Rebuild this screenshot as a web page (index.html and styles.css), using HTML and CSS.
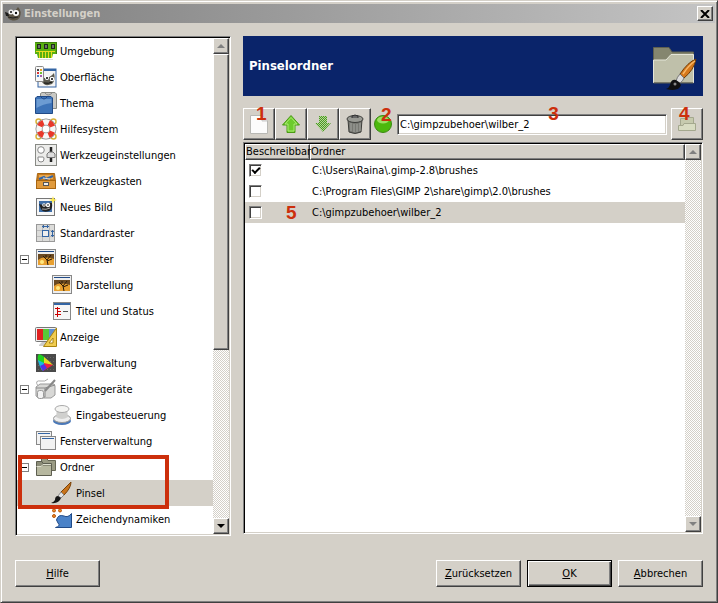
FILE: index.html
```html
<!DOCTYPE html>
<html lang="de">
<head>
    <meta charset="UTF-8">
    <meta name="viewport" content="width=device-width, initial-scale=1.0">
    <title>Einstellungen</title>
    <link rel="stylesheet" href="styles.css">
</head>
<body>
    <div class="window">
        <header class="titlebar">
            <svg class="titlebar-icon" width="18" height="18" viewBox="0 0 18 18">
                <path d="M1 7 L5 9 Q10 8 14 2 Q18 6 16 12 Q13 17 7 15 Q4 14 3 11 Z" fill="#5c5444"/>
                <path d="M1 7 L4 8 L5 11 L2 11 Z" fill="#1c1c1c"/>
                <circle cx="7" cy="7" r="2.5" fill="#eee"/>
                <circle cx="12" cy="8" r="3" fill="#fff"/>
                <circle cx="7" cy="7" r="1" fill="#111"/>
                <circle cx="12" cy="8" r="1.2" fill="#111"/>
                <path d="M4 12 Q9 14 14 12" stroke="#222" fill="none"/>
            </svg>
            <h1 class="titlebar-text">Einstellungen</h1>
            <button class="close" type="button" aria-label="Schließen">
                <svg width="10" height="8" viewBox="0 0 10 8"><path d="M1 0 L9 8 M9 0 L1 8" stroke="#000" stroke-width="2"/></svg>
            </button>
        </header>

        <main class="panes">
            <nav class="tree sunken">
                <ul class="tree-list">
                    <li><div class="row">
                        <svg class="icon" viewBox="0 0 22 22">
                            <path d="M0 2 H22 V14 H18 L17 18 H3 L2 14 H0 Z" fill="#58b010"/>
                            <path d="M.5 2.5 H21.5 V14" fill="none" stroke="#3f8010"/>
                            <path d="M2 4 H6 V9 H2 Z M9 4 H13 V9 H9 Z M16 4 H20 V9 H16 Z" fill="#1f2a1a"/>
                            <path d="M4 5 V8 M11 5 V8 M18 5 V8" stroke="#bbb"/>
                            <path d="M1 11.500 H20 M4.500 12 V18 M7.500 12 V18 M10.500 12 V18 M13.500 12 V18 M16.500 12 V18" stroke="#e8dc20"/>
                            <path d="M2 19.500 H18" stroke="#ddd"/>
                        </svg>
                        <span>Umgebung</span>
                    </div></li>
                    <li><div class="row">
                        <svg class="icon" viewBox="0 0 22 22">
                            <rect x="3" y="3" width="18" height="18" fill="#f4f4f4" stroke="#3465a4"/>
                            <path d="M3 4 H21" stroke="#3465a4" stroke-width="2"/>
                            <path d="M5 11 L10 12 Q15 12 19 7 Q21 14 17 18 Q10 21 7 16 Z" fill="#5b5a50"/>
                            <circle cx="12" cy="12" r="2" fill="#fff"/><circle cx="17" cy="13" r="2.300" fill="#fff"/>
                            <circle cx="12" cy="12" r="1"/><circle cx="17" cy="13" r="1"/>
                            <path d="M9 17 Q14 18 17 16" stroke="#111" fill="none"/>
                            <rect x=".5" y=".5" width="8" height="15" rx="1" fill="#f8f8f8" stroke="#888"/>
                            <path d="M2 3 H4 V5 H2 Z" fill="#444"/><path d="M5 3 H7 V5 H5 Z" fill="#e7a020"/>
                            <path d="M2 6 H4 V8 H2 Z" fill="#d33"/><path d="M5 6 H7 V8 H5 Z" fill="#73c030"/>
                            <path d="M2 9 H4 V11 H2 Z" fill="#4a80c8"/><path d="M5 9 H7 V11 H5 Z" fill="#a55bb0"/>
                        </svg>
                        <span>Oberfläche</span>
                    </div></li>
                    <li><div class="row">
                        <svg class="icon" viewBox="0 0 22 22">
                            <path d="M5.500 1.500 L7 .5 H20 L21.500 2 V16.500 H5.500 Z" fill="#c8c8c4" stroke="#888a85"/>
                            <path d="M10 1 Q13 5 17 1" fill="none" stroke="#888"/>
                            <path d="M.5 6 L2 4.500 H16 L17.500 6 V21.500 H.5 Z" fill="#3d73b8" stroke="#204a87"/>
                            <path d="M1.500 7 H16.500 V11 Q8 12 1.500 16 Z" fill="#6c9bd2"/>
                            <path d="M6 5 Q9 9 12 5" fill="none" stroke="#204a87"/>
                        </svg>
                        <span>Thema</span>
                    </div></li>
                    <li><div class="row">
                        <svg class="icon" viewBox="0 0 22 22">
                            <g fill="none" stroke="#d8b23a" stroke-width="1.500">
                                <circle cx="3.500" cy="3.500" r="2.500"/><circle cx="18.500" cy="3.500" r="2.500"/>
                                <circle cx="3.500" cy="18.500" r="2.500"/><circle cx="18.500" cy="18.500" r="2.500"/>
                            </g>
                            <circle cx="11" cy="11" r="7" fill="none" stroke="#888" stroke-width="7"/>
                            <circle cx="11" cy="11" r="7" fill="none" stroke="#f6f6f6" stroke-width="5.500"/>
                            <circle cx="11" cy="11" r="7" fill="none" stroke="#e8382a" stroke-width="5.500" stroke-dasharray="5.500 5.500" stroke-dashoffset="-2.700"/>
                        </svg>
                        <span>Hilfesystem</span>
                    </div></li>
                    <li><div class="row">
                        <svg class="icon" viewBox="0 0 22 22">
                            <rect x=".5" y=".5" width="21" height="21" fill="#ececea" stroke="#888a85"/>
                            <circle cx="6" cy="6" r="3.300" fill="#fff" stroke="#888"/>
                            <path d="M3 13 H8 Q9 13 9 15 Q9 18 6 18 Q3 18 3 15 Z" fill="#fff" stroke="#888"/>
                            <path d="M16 3 V18" stroke="#222" stroke-width="2.500"/>
                            <path d="M12 13.500 V10 L14 8 H18 L20 10 V13.500 Z" fill="#ddd" stroke="#777"/>
                        </svg>
                        <span>Werkzeugeinstellungen</span>
                    </div></li>
                    <li><div class="row">
                        <svg class="icon" viewBox="0 0 22 22">
                            <path d="M2.500 3.500 H19.500 L20.500 11.500 H1.500 Z" fill="#c87a1c" stroke="#a86510"/>
                            <path d="M4 5 H18 V9 H4 Z" fill="#e8a850"/>
                            <path d="M4 9 L9 7 L11 9 L18 6" fill="none" stroke="#3465a4" stroke-width="2"/>
                            <path d="M8 8 L15 9" stroke="#ddd"/>
                            <rect x="1.500" y="10.500" width="19" height="8" fill="#e09a3c" stroke="#a86510"/>
                            <rect x="8.500" y="12.500" width="5" height="3" fill="#eee" stroke="#555"/>
                        </svg>
                        <span>Werkzeugkasten</span>
                    </div></li>
                    <li><div class="row">
                        <svg class="icon" viewBox="0 0 22 22">
                            <rect x="1.500" y="2.500" width="18" height="17" fill="#f6f6f6" stroke="#777"/>
                            <rect x="4" y="5" width="13" height="11" fill="#3e6ea8"/>
                            <path d="M4 8 L8 9 Q13 6 17 7 Q18 13 14 15 Q8 17 6 13 Z" fill="#222"/>
                            <circle cx="9" cy="9" r="1.800" fill="#fff"/><circle cx="13" cy="9" r="2.200" fill="#fff"/>
                            <circle cx="9" cy="9" r=".8"/><circle cx="13" cy="9" r=".8"/>
                            <path d="M7 13 Q11 14 15 12" stroke="#aaa" fill="none"/>
                            <path d="M18 0 L19 3 L22 4 L19 5 L18 8 L17 5 L14 4 L17 3 Z" fill="#fce94f"/>
                        </svg>
                        <span>Neues Bild</span>
                    </div></li>
                    <li><div class="row">
                        <svg class="icon" viewBox="0 0 22 22">
                            <rect x="1.500" y="2.500" width="18" height="17" fill="#dcdcda" stroke="#999"/>
                            <path d="M7.500 3 V19 M14.500 3 V19 M2 8.500 H19 M2 14.500 H19" stroke="#bbb"/>
                            <rect x="7.500" y="8.500" width="6" height="6" fill="#eee" stroke="#3465a4"/>
                            <path d="M7 4.500 H14 M8.500 3 V6 M12.500 3 V6 M17.500 8 V15 M16 9.500 H19 M16 13.500 H19" fill="none" stroke="#3465a4"/>
                        </svg>
                        <span>Standardraster</span>
                    </div></li>
                    <li>
                        <div class="row">
                            <button class="expander" type="button" aria-label="Bildfenster zuklappen"></button>
                            <svg class="icon" viewBox="0 0 22 22">
                                <rect x="1.500" y="1.500" width="19" height="18" fill="#eee" stroke="#888"/>
                                <path d="M3 3.500 H19" stroke="#204a87"/>
                                <rect x="3" y="6" width="16" height="11" fill="#6b4a22"/>
                                <path d="M3 12 Q8 7 19 11 V17 H3 Z" fill="#e8a030"/>
                                <circle cx="7" cy="14" r="2" fill="#ffe880"/>
                                <path d="M13 17 L12 12 L8 8 M12 12 L16 7 M12 13 L17 11 M11 10 V7" fill="none" stroke="#2a1a08"/>
                            </svg>
                            <span>Bildfenster</span>
                        </div>
                        <ul class="tree-sub">
                            <li><div class="row">
                                <svg class="icon" viewBox="0 0 22 22">
                                    <rect x="1.500" y="1.500" width="19" height="18" fill="#eee" stroke="#888"/>
                                    <path d="M3 3.500 H19" stroke="#204a87"/>
                                    <rect x="3" y="6" width="16" height="11" fill="#6b4a22"/>
                                    <path d="M3 12 Q8 7 19 11 V17 H3 Z" fill="#e8a030"/>
                                    <circle cx="7" cy="14" r="2" fill="#ffe880"/>
                                    <path d="M13 17 L12 12 L8 8 M12 12 L16 7 M12 13 L17 11 M11 10 V7" fill="none" stroke="#2a1a08"/>
                                </svg>
                                <span>Darstellung</span>
                            </div></li>
                            <li><div class="row">
                                <svg class="icon" viewBox="0 0 22 22">
                                    <rect x="2.500" y="2.500" width="17" height="17" fill="#f6f6f6" stroke="#888"/>
                                    <path d="M3 4 H19" stroke="#3465a4" stroke-width="2"/>
                                    <path d="M6.500 7 V17 M4 8.500 H9 M6 11.500 H10 M4 14.500 H10" stroke="#cc0000"/>
                                    <path d="M12 11.500 H17" stroke="#555"/>
                                </svg>
                                <span>Titel und Status</span>
                            </div></li>
                        </ul>
                    </li>
                    <li><div class="row">
                        <svg class="icon" viewBox="0 0 22 22">
                            <rect x=".5" y="1.500" width="21" height="14" rx="1" fill="#eee" stroke="#777"/>
                            <path d="M2 3 H8 V14 H2 Z" fill="#e02020"/><path d="M8 3 H14 V14 H8 Z" fill="#58c838"/><path d="M14 3 H20 V14 H14 Z" fill="#6090d0"/>
                            <path d="M4 19 L7 16 H14 V20 H4 Z" fill="#ccc"/>
                            <path d="M21.500 2 V20.500 H8.500 Z" fill="#f0cc50" stroke="#a88410"/>
                            <path d="M18 12 V17 H14 Z" fill="#fff" stroke="#a88410"/>
                        </svg>
                        <span>Anzeige</span>
                    </div></li>
                    <li><div class="row">
                        <svg class="icon" viewBox="0 0 22 22">
                            <rect x="1" y="2" width="20" height="18" fill="#4a4a4a"/>
                            <path d="M3 5.500 H20 M3 9.500 H20 M3 13.500 H20 M3 17.500 H20" stroke="#666" stroke-dasharray="1 2"/>
                            <path d="M4 2 Q8 3 12 8 L9 12 L3 9 Q2 4 4 2 Z" fill="#20d020"/>
                            <path d="M9 5 Q13 8 18 13 L9 12 Z" fill="#e8d820"/>
                            <path d="M18 13 L8 19 L9 11 Z" fill="#f02040"/>
                            <path d="M3 8 L9 11 L8 19 Q4 15 3 8 Z" fill="#18b8e0"/>
                            <path d="M5 14 L9 12 L12 16 L8 19 Z" fill="#5030e8"/>
                        </svg>
                        <span>Farbverwaltung</span>
                    </div></li>
                    <li>
                        <div class="row">
                            <button class="expander" type="button" aria-label="Eingabegeräte zuklappen"></button>
                            <svg class="icon" viewBox="0 0 22 22">
                                <path d="M1 9 L5 6 H19 L20 8 V17 L16 20 H4 L1 18 Z" fill="#d8d8d6" stroke="#999"/>
                                <path d="M1 10 H10 V19 H2 M10 10 L20 7" fill="none" stroke="#888"/>
                                <path d="M3 8 Q-1 2 6 3 Q10 4 13 1" fill="none" stroke="#aaa"/>
                                <path d="M20 2 L10 13" stroke="#888" stroke-width="2"/>
                                <rect x="2.500" y="12.500" width="6" height="8" rx="2" fill="#f2f2f2" stroke="#999"/>
                            </svg>
                            <span>Eingabegeräte</span>
                        </div>
                        <ul class="tree-sub">
                            <li><div class="row">
                                <svg class="icon" viewBox="0 0 22 22">
                                    <ellipse cx="11" cy="17" rx="9" ry="4" fill="#4a78b8"/>
                                    <ellipse cx="11" cy="14.500" rx="8.500" ry="4" fill="#eee" stroke="#999"/>
                                    <path d="M6 5 L5 13 Q11 17 17 13 L16 5 Z" fill="#d0d0ce"/>
                                    <ellipse cx="11" cy="5" rx="7" ry="3.500" fill="#f4f4f2" stroke="#aaa"/>
                                </svg>
                                <span>Eingabesteuerung</span>
                            </div></li>
                        </ul>
                    </li>
                    <li><div class="row">
                        <svg class="icon" viewBox="0 0 22 22">
                            <rect x="1.500" y="1.500" width="15" height="13" fill="#f2f2f2" stroke="#888"/>
                            <path d="M3 3.500 H15" stroke="#3465a4"/>
                            <rect x="5.500" y="6.500" width="15" height="13" fill="#f2f2f2" stroke="#888"/>
                            <path d="M7 8.500 H19" stroke="#3465a4"/>
                        </svg>
                        <span>Fensterverwaltung</span>
                    </div></li>
                    <li class="marked">
                        <div class="row">
                            <button class="expander" type="button" aria-label="Ordner zuklappen"></button>
                            <svg class="icon" viewBox="0 0 22 22">
                                <path d="M6.500 2.500 H12 L13 4.500 H20.500 V14.500 H6.500 Z" fill="#9a9b84" stroke="#666755"/>
                                <path d="M1.500 5.500 H7 L8 7.500 H16.500 V19.500 H1.500 Z" fill="#8b8c78" stroke="#5d5e50"/>
                                <path d="M2 10 H16 V19 H2 Z" fill="#b7b8a0"/>
                                <path d="M1.500 10.500 H6 L8 8.500 H16" fill="none" stroke="#dedfcf"/>
                            </svg>
                            <span>Ordner</span>
                        </div>
                        <ul class="tree-sub">
                            <li><div class="row selected">
                                <svg class="icon" viewBox="0 0 22 22">
                                    <path d="M20 0 L10 10 L13 13 Q20 6 20 0 Z" fill="#c8741c" stroke="#7a4208"/>
                                    <path d="M10 10 L7 14 L10 16 L13 13 Z" fill="#e4e4e4" stroke="#888"/>
                                    <path d="M7 14 Q4 14 4 18 Q3 20 0 21 Q8 22 10 16 Z" fill="#151515"/>
                                </svg>
                                <span>Pinsel</span>
                            </div></li>
                            <li><div class="row">
                                <svg class="icon" viewBox="0 0 22 22">
                                    <circle cx="3" cy="2.500" r="1.500" fill="#f08a28" stroke="#b85608"/>
                                    <circle cx="9" cy="2.500" r="1.500" fill="#f08a28" stroke="#b85608"/>
                                    <circle cx="3" cy="8" r="1.500" fill="#f08a28" stroke="#b85608"/>
                                    <path d="M5.500 12 Q7 6 13 8 Q17 10 20.500 5.500 V19.500 H4.500 Q10 18 7 15 Z" fill="#4a82c8" stroke="#204a87"/>
                                </svg>
                                <span>Zeichendynamiken</span>
                            </div></li>
                        </ul>
                    </li>
                </ul>
                <div class="scrollbar">
                    <button class="scroll-button" type="button" aria-label="Nach oben" disabled><svg width="8" height="4" viewBox="0 0 8 4"><path d="M0 4 L4 0 L8 4 Z" fill="currentColor"/></svg></button>
                    <div class="scroll-thumb"></div>
                    <div class="scroll-track"></div>
                    <button class="scroll-button" type="button" aria-label="Nach unten"><svg width="8" height="4" viewBox="0 0 8 4"><path d="M0 0 L4 4 L8 0 Z" fill="currentColor"/></svg></button>
                </div>
            </nav>

            <section class="page">
                <div class="banner">
                    <h2>Pinselordner</h2>
                    <svg width="48" height="48" viewBox="0 0 48 48">
                        <path d="M4.500 41 V5.500 H20 L23 10 H44.500 V41 Z" fill="#85866f" stroke="#5f6050"/>
                        <path d="M4.500 40.500 V18 H17 L22 12.500 H44.500 V40.500 Z" fill="#bfc0aa" stroke="#e4e5d8"/>
                        <path d="M5 40.500 H44" stroke="#77786a"/>
                        <path d="M47 17 Q39 20 31 32 L35 36 Q45 28 47 17 Z" fill="#d5781c" stroke="#6f3c06"/>
                        <path d="M46 19 Q40 23 34 32" fill="none" stroke="#f8b868" stroke-width="1.500"/>
                        <path d="M31 32 Q28 35 27 39 L31 41 Q34 39 35 36 Z" fill="#dcdcdc" stroke="#777"/>
                        <path d="M27 38 Q22 37 21 43 Q20 46 17 47 Q30 50 32 43 Q31 42 31 41 Z" fill="#111"/>
                        <circle cx="26" cy="42" r="1.500" fill="#888"/>
                    </svg>
                </div>

                <div class="toolbar">
                    <button class="tool" type="button" aria-label="Neuer Ordner">
                        <svg width="20" height="22" viewBox="0 0 20 22"><path d="M1.500 2.500 H13 L18.500 8 V20.500 H1.500 Z" fill="#fcfcfc" stroke="#b8b8b4"/><path d="M13 3 V8 H18" fill="#e4e4e4" stroke="#c8c8c8"/></svg>
                        <span class="mark">1</span>
                    </button>
                    <button class="tool" type="button" aria-label="Nach oben schieben">
                        <svg width="20" height="20" viewBox="0 0 20 20"><path d="M10 1.500 L18.500 11 H14 V18.500 H6 V11 H1.500 Z" fill="#6ccb2c" stroke="#4a9a14"/><path d="M10 3.500 L16 10 H13 V17 H7 V10 H4 Z" fill="none" stroke="#a9ea70"/></svg>
                    </button>
                    <button class="tool" type="button" aria-label="Nach unten schieben">
                        <svg width="20" height="20" viewBox="0 0 20 20">
                            <defs><pattern id="dither" width="2" height="2" patternUnits="userSpaceOnUse"><path d="M0 0 H2 V2 H0 Z" fill="#b4dc94"/><path d="M0 0 H1 V1 H0 Z M1 1 H2 V2 H1 Z" fill="#4c9428"/></pattern></defs>
                            <path d="M10 18 L2 9 H6 V2 H14 V9 H18 Z" fill="url(#dither)"/>
                        </svg>
                    </button>
                    <button class="tool" type="button" aria-label="Löschen">
                        <svg width="20" height="22" viewBox="0 0 20 22">
                            <path d="M3 7 H17 L16 19 Q10 22 4 19 Z" fill="#777872" stroke="#3c3d3a"/>
                            <path d="M6 10 V18 M9 11 V19 M12 11 V19 M15 10 V18" stroke="#a4a5a0"/>
                            <ellipse cx="10" cy="6" rx="8" ry="3.500" fill="#999a94" stroke="#3c3d3a"/>
                            <path d="M7 5 V3 Q10 1 13 3 V5" fill="#666" stroke="#333"/>
                        </svg>
                    </button>
                    <span class="status">
                        <svg width="20" height="20" viewBox="0 0 20 20"><circle cx="10" cy="10" r="8.500" fill="#4cb80c" stroke="#3a8a10"/><ellipse cx="10" cy="6" rx="6" ry="3.500" fill="#9ae060"/></svg>
                        <span class="mark">2</span>
                    </span>
                    <div class="path">
                        <input type="text" aria-label="Ordnerpfad" value="C:\gimpzubehoer\wilber_2">
                        <span class="mark">3</span>
                    </div>
                    <button class="tool" type="button" aria-label="Ordner auswählen">
                        <svg width="20" height="20" viewBox="0 0 20 20"><path d="M3.500 12 V4.500 H8 L9 3.500 H16.500 V12 Z" fill="#c6caae" stroke="#a4a88e"/><path d="M1.500 11.500 H6 L7 9.500 H18.500 V16.500 H1.500 Z" fill="#d8dcc2" stroke="#a4a88e"/></svg>
                        <span class="mark">4</span>
                    </button>
                </div>

                <div class="folders sunken">
                    <div class="folder-view">
                        <table>
                            <thead>
                                <tr><th class="writable" scope="col">Beschreibbar</th><th scope="col">Ordner</th></tr>
                            </thead>
                            <tbody>
                                <tr>
                                    <td><input type="checkbox" aria-labelledby="dir1" checked></td>
                                    <td id="dir1">C:\Users\Raina\.gimp-2.8\brushes</td>
                                </tr>
                                <tr>
                                    <td><input type="checkbox" aria-labelledby="dir2"></td>
                                    <td id="dir2">C:\Program Files\GIMP 2\share\gimp\2.0\brushes</td>
                                </tr>
                                <tr class="selected">
                                    <td><input type="checkbox" aria-labelledby="dir3"><span class="mark">5</span></td>
                                    <td id="dir3">C:\gimpzubehoer\wilber_2</td>
                                </tr>
                            </tbody>
                        </table>
                    </div>
                    <div class="scrollbar">
                        <button class="scroll-button" type="button" aria-label="Nach oben" disabled><svg width="8" height="4" viewBox="0 0 8 4"><path d="M0 4 L4 0 L8 4 Z" fill="currentColor"/></svg></button>
                        <div class="scroll-track"></div>
                        <button class="scroll-button" type="button" aria-label="Nach unten" disabled><svg width="8" height="4" viewBox="0 0 8 4"><path d="M0 0 L4 4 L8 0 Z" fill="currentColor"/></svg></button>
                    </div>
                </div>
            </section>
        </main>

        <footer class="actions">
            <button class="help" type="button"><u>H</u>ilfe</button>
            <button type="button"><u>Z</u>urücksetzen</button>
            <button class="default" type="button"><u>O</u>K</button>
            <button type="button"><u>A</u>bbrechen</button>
        </footer>
    </div>
</body>
</html>
```

FILE: styles.css
```css
*, *::before, *::after {
    box-sizing: border-box;
}

body {
    margin: 0;
    background-color: #d4d0c8;
    color: #000;
    font-family: "DejaVu Sans Condensed", "Noto Sans", sans-serif;
    font-size: 11px;
    line-height: 16px;
}

button, input {
    font: inherit;
    color: inherit;
}

button {
    padding: 0;
    background-color: #d4d0c8;
    border: 1px solid;
    border-color: #fff #404040 #404040 #fff;
    box-shadow: inset -1px -1px #808080;
}

svg {
    display: block;
    flex: none;
}

ul {
    margin: 0;
    padding: 0;
    list-style: none;
}

.window {
    display: flex;
    flex-direction: column;
    min-height: 100vh;
    padding: 3px 2px 2px;
    border: 1px solid;
    border-color: #d4d0c8 #404040 #404040 #d4d0c8;
    box-shadow: inset 1px 1px #fff, inset -1px -1px #808080;
}

/* title bar */
.titlebar {
    display: flex;
    align-items: center;
    gap: 2px;
    height: 19px;
    padding: 0 2px 0 1px;
    background: linear-gradient(to right, #808080, #c4c4c4);
}

.titlebar-text {
    flex: 1;
    margin: 0;
    color: #d4d0c8;
    font-size: 11px;
}

.close {
    display: flex;
    align-items: center;
    justify-content: center;
    width: 16px;
    height: 15px;
}

/* panes */
.panes {
    display: flex;
    flex: 1;
    gap: 12px;
    padding: 13px 12px 0;
}

.sunken {
    display: flex;
    border: 1px solid;
    border-color: #808080 #fff #fff #808080;
    background-color: #fff;
    box-shadow: inset 1px 1px #000, inset -1px -1px #d4d0c8;
    padding: 1px;
}

.tree {
    flex: none;
    width: 216px;
}

.tree-list {
    flex: 1;
}

.row {
    display: flex;
    align-items: center;
    gap: 3px;
    height: 26px;
    padding-left: 18px;
    white-space: nowrap;
}

.row span {
    padding-top: 2px;
}

.tree-sub .row {
    padding-left: 34px;
}

.row:has(.expander) {
    padding-left: 3px;
}

.selected {
    background-color: #d4d0c8;
}

.icon {
    width: 22px;
    height: 22px;
}

.expander {
    width: 9px;
    height: 9px;
    margin-right: 3px;
    border-color: #808080;
    background: linear-gradient(#000, #000) center / 5px 1px no-repeat #fff;
    box-shadow: none;
}

.marked {
    position: relative;
}

.marked::after {
    content: "";
    position: absolute;
    top: 1px;
    left: 1px;
    width: 151px;
    height: 54px;
    border: 4px solid #cc2f0c;
}

/* scroll bars */
.scrollbar {
    display: flex;
    flex: none;
    flex-direction: column;
    width: 16px;
    background: repeating-conic-gradient(#d4d0c8 0 25%, #fff 0 50%) 0 0 / 2px 2px;
}

.scroll-button {
    display: flex;
    align-items: center;
    justify-content: center;
    height: 16px;
}

.scroll-button:disabled {
    color: #808080;
}

.scroll-thumb {
    flex: 295;
    border: 1px solid;
    border-color: #fff #404040 #404040 #fff;
    background-color: #d4d0c8;
    box-shadow: inset -1px -1px #808080;
}

.scroll-track {
    flex: 169;
}

/* settings page */
.page {
    display: flex;
    flex: 1;
    flex-direction: column;
    min-width: 0;
    padding-bottom: 2px;
}

.banner {
    display: flex;
    align-items: center;
    justify-content: space-between;
    height: 60px;
    padding: 0 6px;
    background-color: #0a246a;
    color: #fff;
}

.banner h2 {
    margin: 0;
    font-size: 13px;
}

.toolbar {
    display: flex;
    align-items: center;
    padding: 12px 0 2px;
}

.tool {
    position: relative;
    display: flex;
    align-items: center;
    justify-content: center;
    width: 32px;
    height: 32px;
}

.status {
    position: relative;
    margin: 0 4px 0 2px;
}

.path {
    position: relative;
    flex: 1;
    margin-right: 4px;
}

.path input {
    display: block;
    width: 100%;
    height: 21px;
    padding: 0 2px;
    border: 1px solid;
    border-color: #808080 #fff #fff #808080;
    box-shadow: inset 1px 1px #404040, inset -1px -1px #d4d0c8;
}

/* red numbers over the controls */
.mark {
    position: absolute;
    color: #cc2f0c;
    font: bold 19px/20px "Liberation Sans", Arial, sans-serif;
}

.tool .mark {
    top: -5px;
    left: 12px;
}

.tool:last-child .mark {
    left: 7px;
}

.status .mark {
    top: -9px;
    left: 8px;
}

.path .mark {
    top: -10px;
    left: 56%;
}

.folders {
    flex: 1;
}

.folder-view {
    flex: 1;
}

table {
    width: 100%;
    border-collapse: separate;
    border-spacing: 0;
    table-layout: fixed;
}

th {
    height: 16px;
    padding: 0;
    border: 1px solid;
    border-color: #fff #404040 #404040 #fff;
    background-color: #d4d0c8;
    box-shadow: inset -1px -1px #808080;
    font-weight: normal;
    line-height: 14px;
    text-align: left;
    white-space: nowrap;
}

.writable {
    width: 65px;
}

td {
    position: relative;
    height: 21px;
    padding: 0 4px;
}

td + td {
    padding-left: 2px;
}

td .mark {
    top: 1px;
    left: 41px;
}

input[type="checkbox"] {
    appearance: none;
    display: block;
    width: 13px;
    height: 13px;
    margin: 0;
    border: 1px solid;
    border-color: #808080 #fff #fff #808080;
    background-color: #fff;
    box-shadow: inset 1px 1px #404040, inset -1px -1px #d4d0c8;
}

input[type="checkbox"]:checked::before {
    content: "";
    display: block;
    width: 8px;
    height: 5px;
    margin: 2px;
    border: solid #000;
    border-width: 0 0 2px 2px;
    transform: rotate(-45deg);
}

/* dialog buttons */
.actions {
    display: flex;
    gap: 6px;
    padding: 24px 12px 13px;
}

.actions button {
    width: 85px;
    height: 27px;
}

.actions .help {
    margin-right: auto;
}

.actions .default {
    border-color: #000;
    box-shadow: inset 1px 1px #fff, inset -1px -1px #404040, inset -2px -2px #808080;
}
```
